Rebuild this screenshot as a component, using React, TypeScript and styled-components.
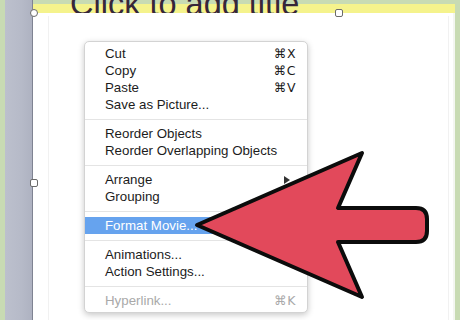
import styled, { createGlobalStyle } from "styled-components";

const GlobalStyle = createGlobalStyle`
    html, body {
        margin: 0;
        padding: 0;
        background: #c8dbb3;
    }
    body {
        font-family: "Liberation Sans", "DejaVu Sans", sans-serif;
    }
`;

type Item =
    | { kind: "item"; label: string; shortcut?: string; active?: boolean; disabled?: boolean; submenu?: boolean }
    | { kind: "sep" };

const MenuItems: Item[] = [
    { kind: "item", label: "Cut", shortcut: "⌘X" },
    { kind: "item", label: "Copy", shortcut: "⌘C" },
    { kind: "item", label: "Paste", shortcut: "⌘V" },
    { kind: "item", label: "Save as Picture..." },
    { kind: "sep" },
    { kind: "item", label: "Reorder Objects" },
    { kind: "item", label: "Reorder Overlapping Objects" },
    { kind: "sep" },
    { kind: "item", label: "Arrange", submenu: true },
    { kind: "item", label: "Grouping", submenu: true },
    { kind: "sep" },
    { kind: "item", label: "Format Movie...", active: true },
    { kind: "sep" },
    { kind: "item", label: "Animations..." },
    { kind: "item", label: "Action Settings..." },
    { kind: "sep" },
    { kind: "item", label: "Hyperlink...", shortcut: "⌘K", disabled: true },
];

const Page = styled.div`
    position: relative;
    display: flex;
    height: 320px;
    overflow: hidden;
    padding: 0 5px;
    background: #c8dbb3;
`;

const Sidebar = styled.div`
    width: 27px;
    flex-shrink: 0;
    background: linear-gradient(to right, #bcc0cd, #b6bac8 60%, #aeb2c1);
    border-right: 1px solid #7f8392;
`;

const Canvas = styled.div`
    flex: 1;
    display: flex;
    flex-direction: column;
    padding-top: 4px;
`;

const TitleBand = styled.div`
    height: 9px;
    background: #f5f38c;
    padding-left: 37px;
    white-space: nowrap;
`;

// only the lower part of the title shows, the rest is above the window
const TitleText = styled.div`
    font-family: "Liberation Sans", sans-serif;
    font-size: 32.5px;
    line-height: 32px;
    margin-top: -16px;
    color: #36263a;
`;

const Slide = styled.div`
    flex: 1;
    background: #ffffff;
    padding: 3px 4px 0 15px;
    border-right: 2px solid #f4f6f1;
`;

const Placeholder = styled.div`
    height: 100%;
    border-left: 1px solid #f1f1f1;
    border-right: 1px solid #f1f1f1;
`;

const Handle = styled.div<{ $round?: boolean; $x: number; $y: number }>`
    position: absolute;
    left: ${({ $x }) => $x - 3}px;
    top: ${({ $y }) => $y - 3}px;
    width: 6px;
    height: 6px;
    background: #ffffff;
    border: 1px solid #6b6b6b;
    border-radius: ${({ $round }) => ($round ? "50%" : "2px")};
`;

const Menu = styled.div`
    position: absolute;
    left: 84px;
    top: 41px;
    width: 224px;
    padding: 3px 0;
    background: #ffffff;
    border: 1px solid #d3d3d3;
    border-radius: 5px;
    box-shadow: 0 2px 6px rgba(0, 0, 0, 0.22);
    box-sizing: border-box;
    font-size: 13.3px;
    color: #1c1c1c;
`;

const Row = styled.div<{ $active?: boolean; $disabled?: boolean }>`
    height: 17px;
    display: flex;
    align-items: center;
    justify-content: space-between;
    padding: 0 11px 0 20px;
    background: ${({ $active }) => ($active ? "#66a3ee" : "transparent")};
    color: ${({ $active, $disabled }) => ($active ? "#ffffff" : $disabled ? "#a9a9a9" : "#1c1c1c")};
    white-space: nowrap;
`;

const Shortcut = styled.span`
    font-family: "DejaVu Sans", "Liberation Sans", sans-serif;
    font-size: 12.5px;
    letter-spacing: 0.5px;
`;

const SubArrow = styled.span`
    width: 0;
    height: 0;
    margin-right: 6px;
    border-top: 4px solid transparent;
    border-bottom: 4px solid transparent;
    border-left: 6px solid #333333;
`;

const Separator = styled.div`
    height: 12px;
    display: flex;
    align-items: center;
    &::after {
        content: "";
        flex: 1;
        height: 1px;
        background: #e4e4e4;
    }
`;

const ArrowLayer = styled.svg`
    position: absolute;
    left: 0;
    top: 0;
    pointer-events: none;
`;

const BigArrow = () => (
    <ArrowLayer width={460} height={320} viewBox="0 0 460 320">
        <path
            d="M 197 225 L 362 153 L 338 208 L 416 208 Q 427 208 427 219 L 427 231 Q 427 242 416 242 L 338 242 L 362 297 Z"
            fill="#e2495b"
            stroke="#0c0c0c"
            strokeWidth={4}
            strokeLinejoin="round"
        />
    </ArrowLayer>
);

const App = () => {
    return (
        <>
            <GlobalStyle />
            <Page>
                <Sidebar />
                <Canvas>
                    <TitleBand>
                        <TitleText>Click to add title</TitleText>
                    </TitleBand>
                    <Slide>
                        <Placeholder />
                    </Slide>
                </Canvas>

                <Handle $round $x={33} $y={12} />
                <Handle $x={338} $y={12} />
                <Handle $x={33} $y={182} />

                <Menu>
                    {MenuItems.map((item, index) => {
                        if (item.kind === "sep") {
                            return <Separator key={index} />;
                        }
                        return (
                            <Row key={index} $active={item.active} $disabled={item.disabled}>
                                <span>{item.label}</span>
                                {item.shortcut && <Shortcut>{item.shortcut}</Shortcut>}
                                {item.submenu && <SubArrow />}
                            </Row>
                        );
                    })}
                </Menu>

                <BigArrow />
            </Page>
        </>
    );
};

export default App;
